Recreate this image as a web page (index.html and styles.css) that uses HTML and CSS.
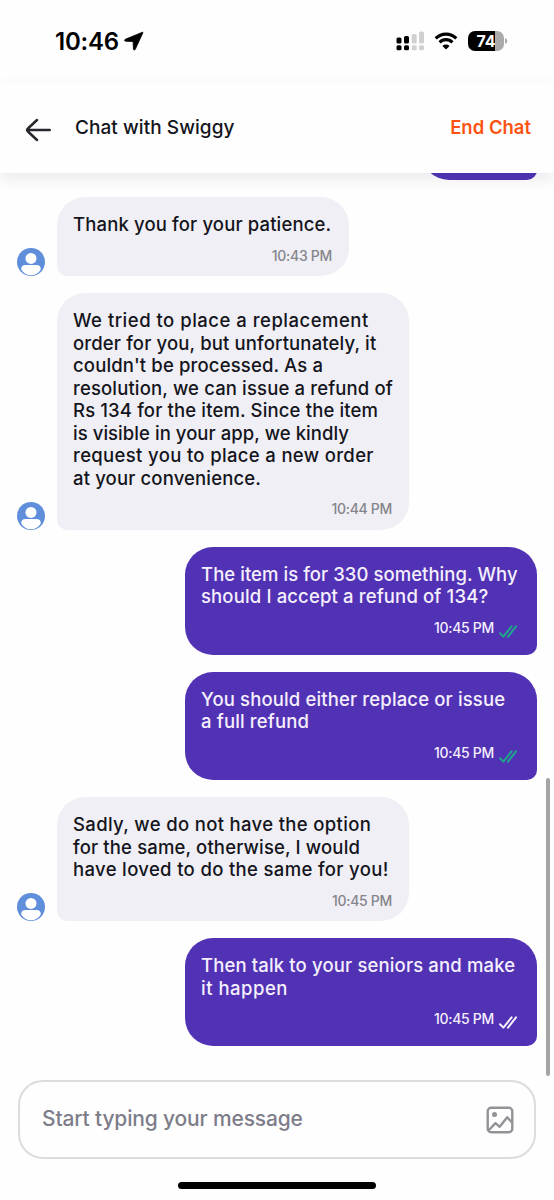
FILE: index.html
```html
<!DOCTYPE html>
<html lang="en">
<head>
    <meta charset="UTF-8">
    <meta name="viewport" content="width=device-width, initial-scale=1.0">
    <title>Chat with Swiggy</title>
    <link rel="stylesheet" href="styles.css">
</head>
<body>
    <svg class="defs" width="0" height="0">
        <symbol id="avatar" viewBox="0 0 28 28">
            <circle cx="14" cy="14" r="14" fill="#5f8edb"/>
            <circle cx="14" cy="10.4" r="5.5" fill="#fff"/>
            <path d="M4.2 21.5c0-3.2 1.6-4.4 4.4-4.4h10.8c2.8 0 4.4 1.2 4.4 4.4-2.2 3.7-5.7 5.8-9.8 5.8s-7.6-2.1-9.8-5.8z" fill="#fff"/>
        </symbol>
        <symbol id="ticks" viewBox="0 0 18 13">
            <path d="M1 8.2l3.4 3.4L12.6 1.4M9 11.6L17 1.4" fill="none" stroke="currentColor" stroke-width="2" stroke-linecap="round" stroke-linejoin="round"/>
        </symbol>
    </svg>

    <div class="screen">
        <div class="status-bar">
            <span class="clock">10:46</span>
            <svg class="location" width="20" height="20" viewBox="0 0 20 20">
                <path d="M18.4 1.2L1.3 8.3c-1.1.5-.9 1.8.3 1.9l7.5.3.3 7.5c.1 1.2 1.4 1.4 1.9.3L18.9 1.7c.1-.4-.1-.6-.5-.5z" stroke="#000" stroke-width="0.8"/>
            </svg>
            <svg class="signal" width="29" height="20" viewBox="0 0 29 20">
                <rect x="0.5" y="6.5" width="5" height="6" rx="1.5"/>
                <rect x="8" y="5" width="5" height="7.5" rx="1.5"/>
                <rect x="15.7" y="3" width="5" height="9.5" rx="1.5" fill="#d0d0d0"/>
                <rect x="23" y="0.5" width="5" height="12" rx="1.5" fill="#d0d0d0"/>
                <rect x="0.5" y="14.3" width="5" height="5" rx="1.5"/>
                <rect x="8" y="14.3" width="5" height="5" rx="1.5"/>
                <rect x="15.7" y="14.3" width="5" height="5" rx="1.5" fill="#d0d0d0"/>
                <rect x="23" y="14.3" width="5" height="5" rx="1.5" fill="#d0d0d0"/>
            </svg>
            <svg class="wifi" width="24" height="18" viewBox="0 0 24 18">
                <path d="M1.7 6.4a14.6 14.6 0 0 1 20.6 0M5.6 10.3a9 9 0 0 1 12.8 0" fill="none" stroke="#000" stroke-width="3.1"/>
                <path d="M12 17.6l-3.6-3.5a5.1 5.1 0 0 1 7.2 0z"/>
            </svg>
            <div class="battery"><span>74</span></div>
            <svg class="battery-tip" width="3" height="6" viewBox="0 0 3 6"><path d="M0 0c3 1 3 5 0 6z" fill="#aaa"/></svg>
        </div>

        <div class="header">
            <svg class="back" width="26" height="24" viewBox="0 0 26 24">
                <path d="M23.7 12H2M11 2L2.2 10.2c-1.4 1.2-1.4 2.4 0 3.6L11 22" fill="none" stroke="#25272c" stroke-width="2.5" stroke-linecap="round"/>
            </svg>
            <h1>Chat with Swiggy</h1>
            <a class="end-chat">End Chat</a>
        </div>

        <div class="messages">
            <div class="bubble sent clipped"></div>

            <div class="row">
                <svg class="avatar"><use href="#avatar"/></svg>
                <div class="bubble received short">
                    <p>Thank you for your patience.</p>
                    <div class="time">10:43 PM</div>
                </div>
            </div>

            <div class="row">
                <svg class="avatar"><use href="#avatar"/></svg>
                <div class="bubble received">
                    <p><span class="wider">We tried to place a replacement</span><br>order for you, but unfortunately, it<br>couldn't be processed. As a<br>resolution, we can issue a refund of<br>Rs 134 for the item. Since the item<br><span class="tight">is visible in your app, we kindly</span><br><span class="wide">request you to place a new order</span><br>at your convenience.</p>
                    <div class="time">10:44 PM</div>
                </div>
            </div>

            <div class="bubble sent">
                <p><span class="tight">The item is for 330 something. Why</span><br>should I accept a refund of 134?</p>
                <div class="time">10:45 PM <svg class="ticks read"><use href="#ticks"/></svg></div>
            </div>

            <div class="bubble sent">
                <p>You should either replace or issue<br>a full refund</p>
                <div class="time">10:45 PM <svg class="ticks read"><use href="#ticks"/></svg></div>
            </div>

            <div class="row">
                <svg class="avatar"><use href="#avatar"/></svg>
                <div class="bubble received">
                    <p><span class="wide">Sadly, we do not have the option</span><br>for the same, otherwise, I would<br><span class="wide">have loved to do the same for you!</span></p>
                    <div class="time">10:45 PM</div>
                </div>
            </div>

            <div class="bubble sent">
                <p>Then talk to your seniors and make<br><span class="wider">it happen</span></p>
                <div class="time">10:45 PM <svg class="ticks"><use href="#ticks"/></svg></div>
            </div>

            <div class="scrollbar"></div>
        </div>

        <div class="composer">
            <span class="placeholder">Start typing your message</span>
            <svg width="28" height="28" viewBox="0 0 28 28" fill="none" stroke="#929297" stroke-width="2.4">
                <rect x="1.7" y="1.7" width="24.6" height="24.6" rx="3.5"/>
                <circle cx="8.5" cy="8.5" r="2.5" fill="#929297" stroke="none"/>
                <path d="M2.5 24.5l7-7.3 4.2 3.6 7.5-9.6 5 5.5" stroke-linejoin="round"/>
            </svg>
        </div>
        <div class="home-indicator"></div>
    </div>
</body>
</html>
```
FILE: styles.css
```css
body {
    margin: 0;
    background-color: #fefefe;
    font-family: Inter, "Liberation Sans", sans-serif;
    font-weight: 500;
    color: #14151c;
}

.defs {
    position: absolute;
}

.screen {
    width: 554px;
    height: 1200px;
    overflow: hidden;
    display: flex;
    flex-direction: column;
}

.status-bar {
    height: 82px;
    box-sizing: border-box;
    padding: 0 46px 0 55px;
    display: flex;
    align-items: center;
    color: #000;
}

.clock {
    font-size: 24px;
    font-weight: 600;
    letter-spacing: -0.2px;
}

.location {
    margin-left: 5px;
}

.signal {
    margin-left: auto;
}

.wifi {
    margin-left: 9px;
}

.battery {
    width: 36px;
    height: 20px;
    margin-left: 10px;
    border-radius: 7px;
    background: linear-gradient(to right, #000 74%, #aaa 74%);
    color: #fff;
    font-size: 16px;
    font-weight: 700;
    line-height: 20px;
    text-align: center;
}

.battery-tip {
    margin-left: 1px;
}

.header {
    height: 91px;
    box-sizing: border-box;
    padding: 0 23px 0 26px;
    border-top: 1px solid #fafafa;
    display: flex;
    align-items: center;
    background-color: #fefefe;
    box-shadow: 0 6px 14px rgba(40, 44, 80, 0.09);
    z-index: 1;
}

.back {
    margin-top: 3px;
}

.header h1 {
    margin: 0 0 2px 23px;
    font-size: 19px;
    font-weight: 500;
    letter-spacing: 0.06px;
}

.end-chat {
    margin: 0 0 2px auto;
    color: #fc5312;
    font-size: 18.5px;
    font-weight: 600;
}

.messages {
    position: relative;
    height: 904px;
    padding-right: 17px;
    display: flex;
    flex-direction: column;
    gap: 17px;
}

.row {
    display: flex;
    align-items: flex-end;
    padding-left: 17px;
}

.avatar {
    width: 28px;
    height: 28px;
    margin-right: 12px;
}

.bubble {
    box-sizing: border-box;
    width: 352px;
    padding: 16px 17px 12.5px 16px;
    border-radius: 28px;
}

.bubble p {
    margin: 0;
    font-size: 18.5px;
    line-height: 22.5px;
    letter-spacing: 0.14px;
    white-space: nowrap;
}

.bubble .tight {
    letter-spacing: 0.05px;
}

.bubble .wide {
    letter-spacing: 0.34px;
}

.bubble .wider {
    letter-spacing: 0.5px;
}

.received {
    background-color: #f0eff5;
    border-bottom-left-radius: 10px;
}

.short {
    width: 292px;
}

.sent {
    align-self: flex-end;
    padding-bottom: 19.3px;
    background-color: #5132b4;
    color: #f5effd;
    border-bottom-right-radius: 10px;
}

.clipped {
    width: 116px;
    height: 60px;
    margin-top: -53px;
}

.time {
    margin-top: 12px;
    font-size: 14px;
    line-height: 16px;
    letter-spacing: -0.3px;
    text-align: right;
    color: #85858c;
}

.sent .time {
    padding-right: 3px;
    display: flex;
    justify-content: flex-end;
    color: #f5effd;
}

.ticks {
    width: 18px;
    height: 13px;
    margin: 5px 0 -2px 5px;
}

.read {
    color: #20a68b;
}

.scrollbar {
    position: absolute;
    right: 4px;
    top: 605px;
    width: 4.5px;
    height: 298px;
    border-radius: 3px;
    background-color: #a5a5a5;
}

.composer {
    height: 79px;
    box-sizing: border-box;
    margin: 3px 18px 0;
    padding: 0 20px 0 22px;
    border: 2px solid #dcdcdf;
    border-radius: 25px;
    display: flex;
    align-items: center;
    justify-content: space-between;
}

.placeholder {
    color: #7d7d89;
    font-size: 21px;
    letter-spacing: -0.16px;
    margin-bottom: 2px;
}

.home-indicator {
    width: 198px;
    height: 7px;
    margin: 23px auto 0;
    border-radius: 4px;
    background-color: #000;
}
```
